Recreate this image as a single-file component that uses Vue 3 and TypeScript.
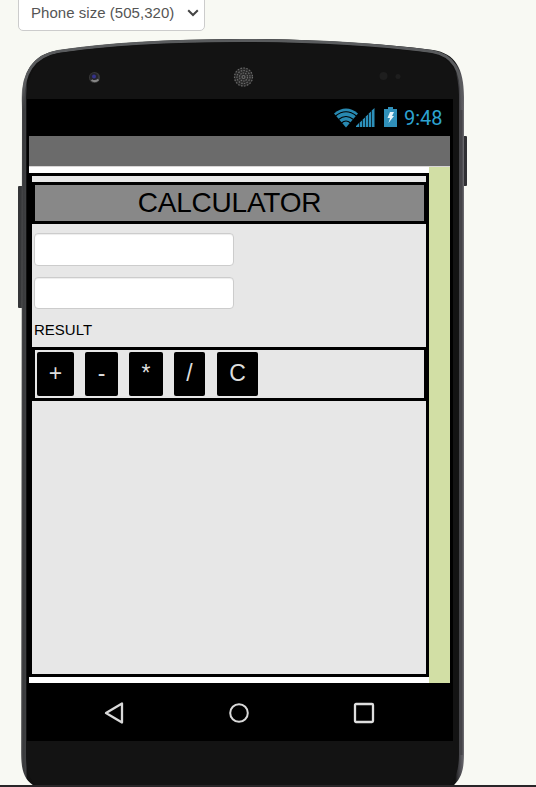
<script setup lang="ts">
import { ref } from 'vue'

interface Operation {
  label: string
  width: number
}

const first = ref('')
const second = ref('')
const operations: Operation[] = [
  { label: '+', width: 37 },
  { label: '-', width: 33 },
  { label: '*', width: 34 },
  { label: '/', width: 31 },
  { label: 'C', width: 41 },
]
</script>

<template>
  <main class="viewer">
    <div class="size-select">
      <span>Phone size (505,320)</span>
      <svg width="12" height="8" viewBox="0 0 12 8"><path d="M1.2 1.2 6 6l4.8-4.8" fill="none" stroke="#444" stroke-width="2" /></svg>
    </div>

    <section class="phone">
      <svg class="frame" width="450" height="756" viewBox="18 31 450 756">
        <defs>
          <linearGradient id="rim" x1="21" x2="465" y1="0" y2="0" gradientUnits="userSpaceOnUse">
            <stop offset="0" stop-color="#777" />
            <stop offset=".004" stop-color="#38393b" />
            <stop offset=".011" stop-color="#404143" />
            <stop offset=".014" stop-color="#111" />
            <stop offset=".978" stop-color="#111" />
            <stop offset=".984" stop-color="#37373a" />
            <stop offset=".993" stop-color="#5b5a5f" />
            <stop offset="1" stop-color="#737275" />
          </linearGradient>
          <linearGradient id="top-rim" x1="0" x2="0" y1="39" y2="110" gradientUnits="userSpaceOnUse">
            <stop offset="0" stop-color="#5a5c5e" />
            <stop offset=".65" stop-color="#5a5b5d" />
            <stop offset="1" stop-color="#5a5b5d" stop-opacity="0" />
          </linearGradient>
        </defs>
        <rect x="18" y="186" width="5" height="122" rx="1" fill="#353638" />
        <rect x="462" y="136" width="5" height="50" rx="1" fill="#303033" />
        <path d="M22 105C21.500 72 32 55 57 50.500 110 42.500 180 39 243 39c63 0 135 4 190 11 22 3.500 31 18 31 47v655c0 18-2 26-12 35H36c-11-6-15-15-15-35Z" fill="url(#rim)" />
        <path d="M23 110V102C22.500 73 33 56 58 51.500 110 43.500 180 40.500 243 40.500c63 0 135 4 189 11 21 3.500 30 18 30 47v11" fill="none" stroke="url(#top-rim)" stroke-width="3" />
        <path d="M26 105C26 74 36 57 59 53 110 45.500 180 42.500 243 42.500c63 0 133 4 186 10.500 22 3 30 17 30 46v653c0 18-3 27-12 35H38c-9-7-12-16-12-35Z" fill="#131313" />
        <path d="M461 110v645" stroke="#454448" stroke-width="3" />
        <circle cx="94.500" cy="77.500" r="5.500" fill="#383838" />
        <circle cx="94" cy="77" r="4" fill="#25242b" />
        <path d="M91.500 80q3.500 2.500 7-.5" fill="none" stroke="#858585" stroke-width="2" />
        <circle cx="94" cy="76.500" r="2" fill="#35328a" />
        <circle cx="243.500" cy="77" r="9.500" fill="#292929" />
        <g fill="none" stroke="#6b6b6b" stroke-width="1.200">
          <circle cx="243.500" cy="77" r="9" stroke-dasharray="1.500 1.500" />
          <circle cx="243.500" cy="77" r="6.500" stroke-dasharray="1.500 1.200" />
          <circle cx="243.500" cy="77" r="4" stroke-dasharray="1.500 1" />
          <circle cx="243.500" cy="77" r="1.500" />
        </g>
        <circle cx="383.500" cy="76" r="4" fill="#1e1e1e" />
        <circle cx="398" cy="76.500" r="2.500" fill="#1e1e1e" />
      </svg>

      <div class="screen">
        <header class="status">
          <svg class="wifi" width="24" height="20" viewBox="0 0 24 20">
            <path d="M0 5.500Q12-4.500 24 5.500L12 19.500Z" fill="#2889b1" />
            <g fill="none" stroke="#000" stroke-width="1.100">
              <path d="M1.500 8Q12-.5 22.500 8M4.500 11.500q7.500-6 15 0M7.500 15q4.500-4 9 0" />
            </g>
          </svg>
          <svg class="signal" width="19" height="19" viewBox="0 0 19 19">
            <path d="M0 19v-1l3-3v4ZM3.700 19v-4.500l2.300-2V19ZM6.700 19v-7.500l2.300-2V19ZM9.700 19V8.500l2.300-2V19ZM12.700 19V5.500l2.300-2V19ZM15.700 19V2.500L18.500 0v19Z" fill="#2c8fba" />
          </svg>
          <svg class="battery" width="13" height="20" viewBox="0 0 13 20">
            <path d="M4 0h5v2h4v18H0V2h4Z" fill="#3090ba" />
            <path d="M6 5h4l-2 4h2L4.500 16 6 11H3.500Z" fill="#e6f4fa" />
          </svg>
          <span class="time">9:48</span>
        </header>

        <div class="app-bar"></div>

        <div class="content">
          <div class="canvas">
            <h1>CALCULATOR</h1>
            <input v-model="first" type="text" />
            <input v-model="second" class="second" type="text" />
            <p>RESULT</p>
            <div class="operations">
              <button v-for="op in operations" :key="op.label" :style="{ width: op.width + 'px' }">{{ op.label }}</button>
            </div>
          </div>
        </div>

        <nav>
          <svg width="20" height="24" viewBox="0 0 20 24"><path d="M18 2.500v19L2 12Z" fill="none" stroke="#d9d9d9" stroke-width="2.300" stroke-linejoin="round" /></svg>
          <svg width="22" height="22" viewBox="0 0 22 22"><circle cx="11" cy="11" r="8.800" fill="none" stroke="#d9d9d9" stroke-width="2" /></svg>
          <svg width="22" height="22" viewBox="0 0 22 22"><rect x="2" y="2" width="18" height="18" rx="1" fill="none" stroke="#dedede" stroke-width="2.300" /></svg>
        </nav>
      </div>
    </section>
    <div class="divider"></div>
  </main>
</template>

<style>
body {
  background: #f8f9f3;
  overflow: hidden;
}
</style>

<style scoped>
.viewer {
  box-sizing: border-box;
  display: flex;
  flex-direction: column;
  width: 536px;
  height: 787px;
  overflow: hidden;
  background: #f8f9f3;
  font-family: "Liberation Sans", Arial, sans-serif;
}
.size-select {
  box-sizing: border-box;
  display: flex;
  flex: none;
  align-items: center;
  justify-content: space-between;
  width: 187px;
  height: 36px;
  margin: -5px 0 0 18px;
  padding: 0 5px 0 12px;
  border: 1px solid #ccc;
  border-radius: 5px;
  background: #fff;
  color: #555;
  font-size: 15px;
}
.size-select span {
  padding-bottom: 2px;
  letter-spacing: .04px;
}
.phone {
  position: relative;
  flex: none;
  width: 450px;
  height: 754px;
  margin-left: 18px;
  overflow: hidden;
}
.frame {
  position: absolute;
  top: 0;
  left: 0;
}
.screen {
  position: relative;
  box-sizing: border-box;
  width: 426px;
  height: 642px;
  margin: 68px 0 0 9px;
  padding: 0 3px 0 2px;
  background: #000;
}
.status {
  box-sizing: border-box;
  display: flex;
  align-items: flex-start;
  justify-content: flex-end;
  height: 37px;
  padding: 8px 8px 0 0;
}
.status svg {
  display: block;
}
.wifi {
  margin-top: 1px;
}
.signal {
  margin: 1px 9px 0 -2px;
}
.battery {
  margin-right: 7px;
}
.time {
  width: 38px;
  color: #2da3d1;
  font: 20px/23px Roboto, sans-serif;
  white-space: nowrap;
}
.app-bar {
  box-sizing: border-box;
  height: 31px;
  border-bottom: 1px solid #d8d6d6;
  background: #6b6b6b;
}
.content {
  box-sizing: border-box;
  height: 516px;
  padding: 6px 21px 6px 0;
  background: linear-gradient(90deg, #fff 400px, #d2dfa5 400px);
}
.canvas {
  box-sizing: border-box;
  width: 400px;
  height: 504px;
  padding-top: 6px;
  border: 3px solid #000;
  background: #e7e7e7;
}
h1 {
  box-sizing: border-box;
  width: 395px;
  height: 42px;
  margin: 0 0 9px;
  border: 3px solid #000;
  background: #888;
  color: #000;
  font-size: 28px;
  font-weight: 400;
  letter-spacing: -.2px;
  line-height: 35px;
  text-align: center;
}
input {
  box-sizing: border-box;
  display: block;
  width: 200px;
  height: 33px;
  margin: 0 0 11px 2px;
  border: 1px solid #ccc;
  border-radius: 4px;
  outline: 0;
  background: #fff;
  box-shadow: inset 0 1px 1px rgba(0, 0, 0, .075);
  font: 15px "Liberation Sans", sans-serif;
}
.second {
  height: 32px;
}
p {
  height: 27px;
  margin: 0 0 0 2px;
  color: #000;
  font-size: 15px;
  line-height: 20px;
}
.operations {
  box-sizing: border-box;
  display: flex;
  gap: 11px;
  width: 395px;
  height: 54px;
  padding: 2px;
  border: 3px solid #000;
}
button {
  box-sizing: border-box;
  flex: none;
  height: 44px;
  padding: 0 0 2px;
  border: 0;
  border-radius: 2px;
  background: #000;
  color: #ddd;
  font: 23px/42px "Liberation Sans", Arial, sans-serif;
}
button:last-child {
  margin-left: 1px;
}
nav {
  box-sizing: border-box;
  display: flex;
  align-items: center;
  justify-content: space-between;
  height: 58px;
  padding: 1px 75px 0;
}
.divider {
  flex: none;
  height: 2px;
  background: #292628;
}
</style>
